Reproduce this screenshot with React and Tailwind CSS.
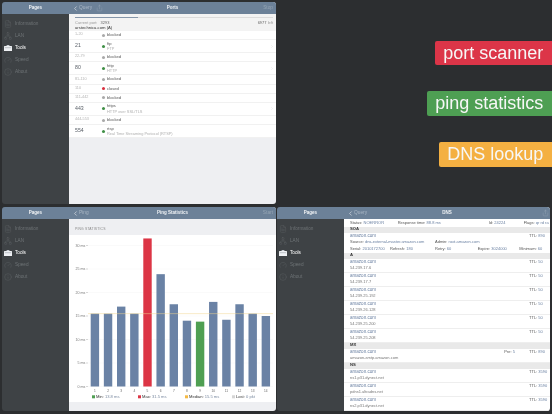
import React from "react";
import { Info, Gauge, Network, FileText, ChevronRight, ChevronLeft, Share } from "lucide-react";

function ToolsIcon() {
  return (
    <svg viewBox="0 0 8 6" className="w-[8px] h-[6px] shrink-0">
      <rect x="0" y="1" width="8" height="5" rx="0.5" fill="#eef0f3" />
      <rect x="2.6" y="0" width="2.8" height="1" fill="#c9ced4" />
      <rect x="0.8" y="2.6" width="6.4" height="0.5" fill="#8a929a" />
    </svg>
  );
}

function Sidebar() {
  const items = [
    ["Information", FileText],
    ["LAN", Network],
    ["Tools", null],
    ["Speed", Gauge],
    ["About", Info],
  ];
  return (
    <div className="w-[67px] shrink-0 bg-[#3e4245] flex flex-col">
      <div className="h-[12px] bg-[#6c8198] flex items-center justify-center text-[4.5px] font-bold text-[#f2f4f6]">Pages</div>
      <div className="flex flex-col pt-[3.5px]">
        {items.map(([name, Icon]) => (
          <div key={name} className={`h-[12px] flex items-center gap-[3px] pl-[2px] text-[4.7px] ${Icon ? "text-[#6e7376]" : "text-white"}`}>
            {Icon ? <Icon className="w-[8px] h-[8px] shrink-0 text-[#5f6467]" strokeWidth={1.2} /> : <ToolsIcon />}
            <span>{name}</span>
          </div>
        ))}
      </div>
    </div>
  );
}

function Header({ back, title, right, share, shareRight }) {
  return (
    <div className="h-[12px] bg-[#6c8198] flex items-center text-[4.8px] relative shrink-0">
      <div className="flex items-center pl-[3px] text-[#a9b6c4]">
        <ChevronLeft className="w-[7px] h-[9px] text-[#e2e6ea]" strokeWidth={2.2} />
        <span>{back}</span>
        {share && <Share className="w-[7px] h-[8px] ml-[4px]" strokeWidth={1} />}
      </div>
      <span className="absolute inset-x-0 text-center text-[4.5px] font-bold text-[#eef1f4]">{title}</span>
      {right && <span className="ml-auto pr-[3px] text-[#94a4b3]">{right}</span>}
      {shareRight && <Share className="ml-auto mr-[1px] w-[7px] h-[8px] text-[#a9b6c4]" strokeWidth={1} />}
    </div>
  );
}

function BlockRow({ range, label = "blocked", dot = "bg-[#a9a9a9]" }) {
  return (
    <div className="h-[9.2px] flex items-center border-b border-[#f1f1f1] pl-[6px] text-[4.1px] text-[#555]">
      <span className="w-[27px] text-[3.8px] text-[#b5b5b5]">{range}</span>
      <span className={`w-[3px] h-[3px] rounded-full ${dot}`} />
      <span className="ml-[2px]">{label}</span>
    </div>
  );
}

function OpenRow({ port, name, desc, chevron = true }) {
  return (
    <div className="h-[13px] flex items-center border-b border-[#f1f1f1] pl-[6px] pr-[2px]">
      <span className="w-[27px] text-[5.2px] text-[#5a6068]">{port}</span>
      <span className="w-[3px] h-[3px] rounded-full bg-[#3f8f45]" />
      <div className="ml-[2px] flex flex-col leading-[5.6px]">
        <span className="text-[4.1px] text-[#555]">{name}</span>
        <span className="text-[3.9px] text-[#b0b0b0]">{desc}</span>
      </div>
      {chevron && <ChevronRight className="ml-auto w-[4px] h-[5px] text-[#c8c8c8]" strokeWidth={1.5} />}
    </div>
  );
}

function PortsPanel() {
  return (
    <div className="flex rounded-[3px] overflow-hidden">
      <Sidebar />
      <div className="flex-1 flex flex-col bg-[#eeeff2]">
        <Header back="Query" title="Ports" right="Stop" share />
        <div className="h-[17px] shrink-0 bg-[#f3f3f3] pl-[6px] pr-[3px] pt-[3px]">
          <div className="h-[1px] bg-[#dcdcdc]">
            <div className="h-[1px] w-[32%] bg-[#8495a9]" />
          </div>
          <div className="flex justify-between text-[4px] text-[#9a9a9a] mt-[2px] leading-[5px]">
            <span>Current port: <span className="text-[#666] ml-[2px]">3293</span></span>
            <span><span className="text-[#666]">6977</span> left</span>
          </div>
          <div className="text-[4.2px] text-[#333] leading-[5.5px]">arstechnica.com (A)</div>
        </div>
        <div className="bg-white flex flex-col">
          <BlockRow range="1-20" />
          <OpenRow port="21" name="ftp" desc="FTP" />
          <BlockRow range="22-79" />
          <OpenRow port="80" name="http" desc="HTTP" />
          <BlockRow range="81-110" />
          <BlockRow range="110" label="closed" dot="bg-[#d9303f]" />
          <BlockRow range="111-442" />
          <OpenRow port="443" name="https" desc="HTTP over SSL/TLS" />
          <BlockRow range="444-553" />
          <OpenRow port="554" name="rtsp" desc="Real Time Streaming Protocol (RTSP)" chevron={false} />
        </div>
      </div>
    </div>
  );
}

const bars = [15.5, 15.5, 17, 15.5, 31.5, 23.9, 17.5, 14, 13.8, 18, 14.2, 17.5, 15.5, 15];

function Chart() {
  const y0 = 151.5;
  const scale = 4.7;
  const legend = [
    [23, "#4f9f52", "Min:", "13.8 ms"],
    [69, "#dc3545", "Max:", "31.5 ms"],
    [116, "#f5b942", "Median:", "15.5 ms"],
    [163, "#d5d5d5", "Lost:", "0 pkt"],
  ];
  return (
    <svg viewBox="0 0 207 167" className="w-[207px] h-[167px] block" fontFamily="'Liberation Sans', sans-serif">
      {[0, 5, 10, 15, 20, 25, 30].map((v) => (
        <g key={v}>
          <text x="16.3" y={y0 - v * scale + 1.3} textAnchor="end" fontSize="3.6" fill="#777">{v} ms</text>
          <line x1="17" x2="19" y1={y0 - v * scale} y2={y0 - v * scale} stroke="#999" strokeWidth="0.4" />
          <line x1="19" x2="204" y1={y0 - v * scale} y2={y0 - v * scale} stroke="#f3f3f3" strokeWidth="0.4" />
        </g>
      ))}
      {bars.map((v, i) => {
        const x = 21.7 + i * 13.15;
        const fill = i === 4 ? "#dc3545" : i === 8 ? "#4f9f52" : "#6a82a5";
        return (
          <g key={i}>
            <rect x={x} y={y0 - v * scale} width="8.4" height={v * scale} fill={fill} />
            <text x={x + 4.2} y={y0 + 5} textAnchor="middle" fontSize="3.2" fill="#666">{i + 1}</text>
          </g>
        );
      })}
      <line x1="19" x2="204" y1={y0 - 15.5 * scale} y2={y0 - 15.5 * scale} stroke="#f2d48e" strokeWidth="0.5" />
      <g fontSize="4.1">
        {legend.map(([x, c, k, v]) => (
          <g key={k}>
            <rect x={x} y="160.3" width="3" height="3" fill={c} />
            <text x={x + 4} y="163.4" fill="#333">{k} <tspan fill="#7a8aa0">{v}</tspan></text>
          </g>
        ))}
      </g>
    </svg>
  );
}

function PingPanel() {
  return (
    <div className="flex rounded-[3px] overflow-hidden">
      <Sidebar />
      <div className="flex-1 flex flex-col bg-[#eeeff2]">
        <Header back="Ping" title="Ping Statistics" right="Start" />
        <div className="h-[16px] flex items-center pl-[6px] text-[3.4px] tracking-[0.15px] text-[#8a8a8a] pt-[6px]">PING STATISTICS</div>
        <div className="bg-white"><Chart /></div>
      </div>
    </div>
  );
}

function Band({ children }) {
  return <div className="h-[6px] bg-[#e9e9e9] flex items-center pl-[6px] text-[4.2px] font-bold text-[#333]">{children}</div>;
}

function Ttl({ v }) {
  return <span className="w-[19px] whitespace-nowrap text-[4px] text-[#555]">TTL: <span className="text-[#6c82a3]">{v}</span></span>;
}

function Rec({ ttl, value, pre }) {
  return (
    <div className="h-[14px] border-b border-[#eeeeee] pl-[6px] pr-[2px] flex flex-col justify-center">
      <div className="flex items-center text-[4.55px] leading-[6.5px] text-[#6c82a3]">
        <span>amazon.com</span>
        <span className="ml-auto flex items-center">
          {pre && <span className="w-[24.7px] whitespace-nowrap text-[4px] text-[#555]">Pre: <span className="text-[#6c82a3]">{pre}</span></span>}
          <Ttl v={ttl} />
        </span>
      </div>
      <div className="text-[4px] leading-[6.5px] text-[#777]">{value}</div>
    </div>
  );
}

function K({ k, v, className = "" }) {
  return (
    <span className={`whitespace-nowrap text-[#555] ${className}`}>{k} <span className="text-[#6c82a3]">{v}</span></span>
  );
}

function DnsPanel() {
  return (
    <div className="flex rounded-[3px] overflow-hidden mr-[2px]">
      <Sidebar />
      <div className="flex-1 flex flex-col bg-white overflow-hidden">
        <Header back="Query" title="DNS" shareRight />
        <div className="h-[7.5px] flex items-center pl-[6px] text-[4px]">
          <K k="Status:" v="NOERROR" className="w-[47.7px]" />
          <K k="Response time:" v="88.8 ms" className="w-[91px]" />
          <K k="Id:" v="24224" className="w-[35px]" />
          <K k="Flags:" v="qr rd ra" />
        </div>
        <Band>SOA</Band>
        <div className="h-[20px] pl-[6px] pr-[2px] flex flex-col justify-center">
          <div className="flex text-[4.55px] leading-[6.4px] text-[#6c82a3] justify-between">
            <span>amazon.com</span>
            <Ttl v="890" />
          </div>
          <div className="flex text-[4px] leading-[6.4px]">
            <K k="Source:" v="dns-external-master.amazon.com" className="w-[85px]" />
            <K k="Admin:" v="root.amazon.com" />
          </div>
          <div className="flex text-[4px] leading-[6.4px]">
            <K k="Serial:" v="2010172700" className="w-[40px]" />
            <K k="Refresh:" v="180" className="w-[45px]" />
            <K k="Retry:" v="60" className="w-[42.7px]" />
            <K k="Expire:" v="3024000" className="w-[41.6px]" />
            <K k="Minimum:" v="60" />
          </div>
        </div>
        <Band>A</Band>
        {["54.239.17.6", "54.239.17.7", "54.239.25.192", "54.239.26.128", "54.239.25.200", "54.239.25.208"].map((v) => (
          <Rec key={v} ttl="50" value={v} />
        ))}
        <Band>MX</Band>
        <Rec ttl="890" pre="5" value="amazon-smtp.amazon.com" />
        <Band>NS</Band>
        <Rec ttl="3590" value="ns1.p31.dynect.net" />
        <Rec ttl="3590" value="pdns1.ultradns.net" />
        <Rec ttl="3590" value="ns2.p31.dynect.net" />
      </div>
    </div>
  );
}

function Tag({ color, children }) {
  return (
    <div className={`h-[24.7px] ${color} rounded-l-[2px] pl-[8px] pr-[8.7px] flex items-center text-[18px] text-[#f7f7f7]`}>
      {children}
    </div>
  );
}

export default function App() {
  return (
    <div className="w-[552px] h-[414px] bg-[#2c2e30] overflow-hidden grid grid-cols-[274px_275px] grid-rows-[202px_204px] gap-x-[1px] gap-y-[3px] pl-[2px] pt-[2px] blur-[0.3px] font-['Liberation_Sans',sans-serif]">
      <PortsPanel />
      <div className="flex flex-col items-end gap-[26px] pt-[38.7px]">
        <Tag color="bg-[#dc3548]">port scanner</Tag>
        <Tag color="bg-[#4e9f53]">ping statistics</Tag>
        <Tag color="bg-[#f4b042]">DNS lookup</Tag>
      </div>
      <PingPanel />
      <DnsPanel />
    </div>
  );
}
